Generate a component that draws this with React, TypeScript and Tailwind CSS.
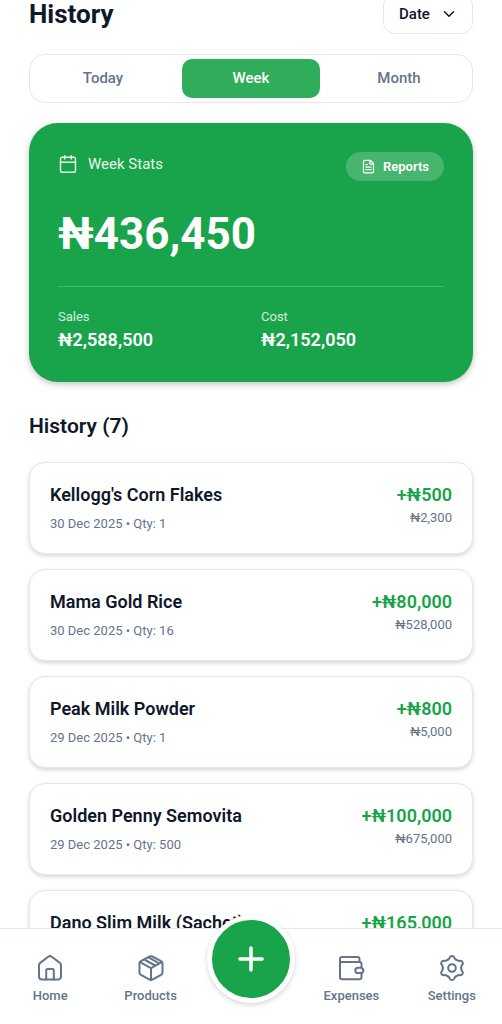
import React, { useState } from 'react';
import { Calendar, ChevronDown, FileText, Plus } from 'lucide-react';

interface Sale {
  id: number;
  name: string;
  date: string;
  qty: number;
  profit: string;
  total: string;
}

interface NavItemProps {
  label: string;
  children: React.ReactNode;
}

const SALES: Sale[] = [
  { id: 1, name: "Kellogg's Corn Flakes", date: '30 Dec 2025', qty: 1, profit: '500', total: '2,300' },
  { id: 2, name: 'Mama Gold Rice', date: '30 Dec 2025', qty: 16, profit: '80,000', total: '528,000' },
  { id: 3, name: 'Peak Milk Powder', date: '29 Dec 2025', qty: 1, profit: '800', total: '5,000' },
  { id: 4, name: 'Golden Penny Semovita', date: '29 Dec 2025', qty: 500, profit: '100,000', total: '675,000' },
  { id: 5, name: 'Dano Slim Milk (Sachet)', date: '29 Dec 2025', qty: 150, profit: '165,000', total: '825,000' },
];

const PERIODS = ['Today', 'Week', 'Month'];

const NavItem: React.FC<NavItemProps> = ({ label, children }) => (
  <a href="#" className="flex flex-col items-center pt-[25px] text-[13px] leading-5 font-medium text-[#64748b]">
    <svg
      width="28"
      height="28"
      viewBox="0 0 28 28"
      fill="none"
      stroke="currentColor"
      strokeWidth="2"
      strokeLinecap="round"
      strokeLinejoin="round"
      aria-hidden="true"
    >
      {children}
    </svg>
    <span className="mt-1">{label}</span>
  </a>
);

const SaleCard: React.FC<{ sale: Sale }> = ({ sale }) => (
  <li className="flex justify-between rounded-2xl border border-slate-200 bg-white p-5 shadow-[0_2px_4px_rgba(0,0,0,0.16)]">
    <div>
      <h3 className="text-[18px] leading-6 font-semibold">{sale.name}</h3>
      <p className="mt-2 text-[13px] leading-[18px] text-[#64748b]">
        {sale.date} • Qty: {sale.qty}
      </p>
    </div>
    <div className="text-right">
      <p className="text-[18px] leading-6 font-semibold text-[#19a34a]">+₦{sale.profit}</p>
      <p className="mt-[2px] text-[13px] leading-[18px] text-[#64748b]">₦{sale.total}</p>
    </div>
  </li>
);

const App: React.FC = () => {
  const [period, setPeriod] = useState('Week');

  return (
    <div className="flex h-screen flex-col bg-white font-[Roboto,sans-serif] text-[#0f172a]">
      <main className="min-h-0 flex-1 overflow-y-auto px-[29px] [scrollbar-width:none]">
        {/* Header */}
        <header className="-mt-[6px] flex items-center justify-between">
          <h1 className="text-[26px] leading-10 font-bold">History</h1>
          <div className="relative">
            <select
              aria-label="Sort by"
              className="h-10 w-[90px] appearance-none rounded-xl border border-slate-200 bg-white pl-[15px] text-[15px] font-medium outline-none"
            >
              <option>Date</option>
              <option>Profit</option>
            </select>
            <ChevronDown size={18} className="pointer-events-none absolute top-[11px] right-[15px]" />
          </div>
        </header>

        {/* Period tabs */}
        <div className="mt-5 grid grid-cols-3 gap-[10px] rounded-2xl border border-slate-200 p-1">
          {PERIODS.map((p) => (
            <button
              key={p}
              type="button"
              onClick={() => setPeriod(p)}
              className={`h-[39px] rounded-[10px] text-[15px] font-medium ${
                p === period ? 'bg-[#2fad5b] text-white' : 'text-[#64748b]'
              }`}
            >
              {p}
            </button>
          ))}
        </div>

        {/* Stats */}
        <section className="mt-5 rounded-[29px] bg-[#19a34a] p-[29px] text-white shadow-[0_2px_6px_rgba(0,0,0,0.25)]">
          <div className="flex items-start justify-between">
            <h2 className="flex items-center gap-[10px] text-[15px] leading-6 text-white/90">
              <Calendar size={20} strokeWidth={1.75} />
              Week Stats
            </h2>
            <button
              type="button"
              className="flex h-[29px] items-center gap-[7px] rounded-full bg-white/20 px-[15px] text-[13px] font-semibold"
            >
              <FileText size={15} />
              Reports
            </button>
          </div>
          <p className="mt-[27px] text-[44px] leading-[52px] font-bold">₦436,450</p>
          <dl className="mt-[26px] grid grid-cols-2 gap-5 border-t border-white/20 pt-5">
            <div>
              <dt className="text-[13px] leading-5 text-white/80">Sales</dt>
              <dd className="text-[18px] leading-[26px] font-semibold">₦2,588,500</dd>
            </div>
            <div>
              <dt className="text-[13px] leading-5 text-white/80">Cost</dt>
              <dd className="text-[18px] leading-[26px] font-semibold">₦2,152,050</dd>
            </div>
          </dl>
        </section>

        {/* Sales list */}
        <h2 className="mt-[30px] text-[21px] leading-7 font-semibold">History (7)</h2>
        <ul className="mt-[22px] flex flex-col gap-[15px] pb-10">
          {SALES.map((sale) => (
            <SaleCard key={sale.id} sale={sale} />
          ))}
        </ul>
      </main>

      {/* Bottom navigation */}
      <nav className="relative z-10 grid h-24 shrink-0 grid-cols-5 border-t border-slate-200 bg-white">
        <NavItem label="Home">
          <path d="M3 11.4c0-1 .4-1.9 1.2-2.5l8-6.1c1.1-.8 2.5-.8 3.6 0l8 6.1c.8.6 1.2 1.5 1.2 2.5v11.1a3 3 0 0 1-3 3H6a3 3 0 0 1-3-3z" />
          <path d="M10.2 25.5v-9c0-.8.6-1.4 1.4-1.4h4.8c.8 0 1.4.6 1.4 1.4v9" />
        </NavItem>
        <NavItem label="Products">
          <path d="M12.7 2.5a2.8 2.8 0 0 1 2.6 0l8.8 4.6c.9.5 1.4 1.3 1.4 2.2v9.4c0 .9-.5 1.7-1.4 2.2l-8.8 4.8a2.8 2.8 0 0 1-2.6 0l-8.8-4.8a2.5 2.5 0 0 1-1.4-2.2V9.3c0-.9.5-1.7 1.4-2.2z" />
          <path d="M3.1 8.2 14 14.2l10.9-6M14 14.2V26M7.2 5.5l11 6M11.5 3.3l10.7 6" />
        </NavItem>
        <div className="flex justify-center">
          <button
            type="button"
            aria-label="Add sale"
            className="-mt-[14px] flex size-[88px] shrink-0 items-center justify-center rounded-full border-[5px] border-white bg-[#19a34a] text-white shadow-[0_2px_5px_rgba(0,0,0,0.16)]"
          >
            <Plus size={38} strokeWidth={2.25} />
          </button>
        </div>
        <NavItem label="Expenses">
          <path d="M24.5 13.5V10a2 2 0 0 0-2-2H3M24.5 19.5V23a2.3 2.3 0 0 1-2.3 2.3H5.3A2.3 2.3 0 0 1 3 23V5a2 2 0 0 1 2-2h15.5a2 2 0 0 1 2 2v3" />
          <rect x="18.3" y="13.7" width="8" height="5.4" rx="2.7" />
        </NavItem>
        <NavItem label="Settings">
          {[0, 60, 120, 180, 240, 300].map((angle) => (
            <path
              key={angle}
              transform={`rotate(${angle} 14 14)`}
              d="M9.4 6c1.1-.6 2-1.1 2.3-2.4Q12.1 1.9 14 1.9t2.3 1.7c.3 1.3 1.2 1.8 2.3 2.4"
            />
          ))}
          <circle cx="14" cy="14" r="3.8" />
        </NavItem>
      </nav>
    </div>
  );
};

export default App;
